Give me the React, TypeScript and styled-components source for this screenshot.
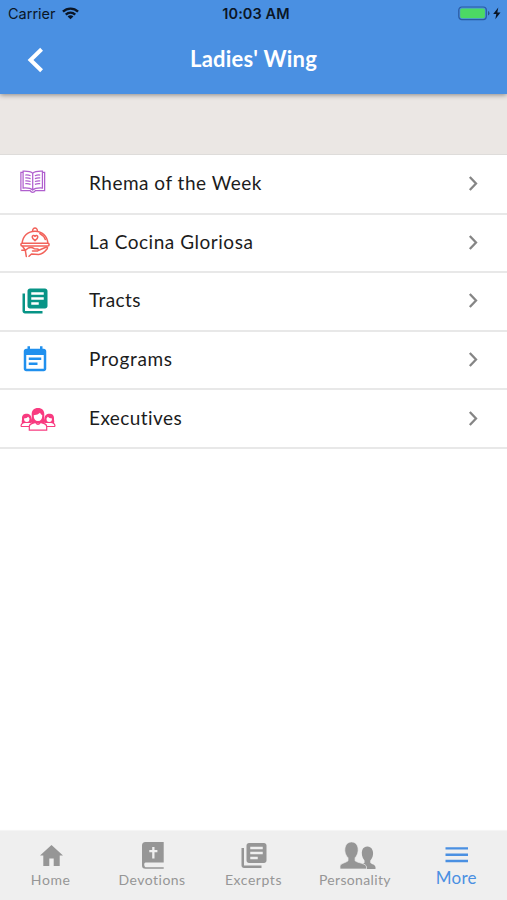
import React from 'react';
import styled, { createGlobalStyle } from 'styled-components';

const GlobalStyle = createGlobalStyle`
  *, *::before, *::after { box-sizing: border-box; }
  body { margin: 0; background: #fff; font-family: Lato, "Liberation Sans", sans-serif; }
`;

const Screen = styled.div`
  display: flex;
  flex-direction: column;
  width: 507px;
  height: 900px;
  overflow: hidden;
  background: #fff;
`;

const Header = styled.header`
  position: relative;
  z-index: 1;
  flex: none;
  height: 94px;
  background: #4a90e2;
  box-shadow: 0 1px 5px rgba(0, 0, 0, 0.42);
`;

const StatusBar = styled.div`
  display: grid;
  grid-template-columns: 1fr auto 1fr;
  align-items: center;
  height: 28px;
  padding: 0 6px 0 8px;
  color: #0b1626;
  font: 400 14.5px/28px Inter, "Liberation Sans", sans-serif;
`;

const Carrier = styled.div`
  display: flex;
  align-items: center;
  gap: 6px;
  svg { flex: none; margin-top: -2px; }
`;

const Clock = styled.div`
  font-weight: 600;
  letter-spacing: 0.1px;
  padding-left: 3px;
`;

const Power = styled.div`
  display: flex;
  justify-content: flex-end;
`;

const NavBar = styled.div`
  display: grid;
  grid-template-columns: 72px 1fr 72px;
  align-items: center;
  height: 62px;
  svg { display: block; margin-left: 27px; margin-top: 1px; }
`;

const Title = styled.h1`
  margin: 0;
  color: #fff;
  text-align: center;
  font-size: 22px;
  line-height: 30px;
  font-weight: 700;
  letter-spacing: 0.2px;
`;

const Banner = styled.div`
  flex: none;
  height: 61px;
  background: #ebe7e4;
  border-bottom: 1px solid #dedcda;
`;

const List = styled.ul`
  display: grid;
  grid-auto-rows: 58.6px;
  margin: 0;
  padding: 1px 0 0;
  list-style: none;
`;

const Row = styled.li`
  display: grid;
  grid-template-columns: 69px 1fr auto;
  align-items: center;
  padding: 0 27px 2px 20px;
  border-bottom: 2px solid #e8e8e8;
`;

const RowIcon = styled.span<{ $drop: number }>`
  display: block;
  height: 30px;
  margin-top: ${({ $drop }) => $drop}px;
  margin-bottom: ${({ $drop }) => -$drop}px;
  svg { display: block; }
`;

const RowLabel = styled.span<{ $tracking: number }>`
  color: #1c1c1c;
  font-size: 19px;
  line-height: 26px;
  letter-spacing: ${({ $tracking }) => $tracking}px;
`;

const TabBar = styled.nav`
  display: grid;
  grid-template-columns: repeat(5, 1fr);
  flex: none;
  height: 69px;
  margin-top: auto;
  background: #efefef;
  box-shadow: 0 -1px 1px #f5f5f5;
`;

const Tab = styled.div<{ $active?: boolean }>`
  display: flex;
  flex-direction: column;
  align-items: center;
  padding-top: ${({ $active }) => ($active ? 7 : 9)}px;
  color: ${({ $active }) => ($active ? '#4a90e2' : '#969696')};
  svg { display: block; height: 31px; }
`;

const TabIcon = styled.span<{ $indent?: number }>`
  display: block;
  padding-left: ${({ $indent = 0 }) => $indent}px;
`;

const TabLabel = styled.span<{ $active?: boolean; $tracking: number }>`
  font-size: ${({ $active }) => ($active ? 17 : 14)}px;
  line-height: 18px;
  letter-spacing: ${({ $tracking }) => $tracking}px;
`;

const LIBRARY_PATH =
  'M4 6H2v14c0 1.1.9 2 2 2h14v-2H4V6zm16-4H8c-1.1 0-2 .9-2 2v12c0 1.1.9 2 2 2h12c1.1 0 2-.9 2-2V4c0-1.1-.9-2-2-2zm-1 9H9V9h10v2zm-4 4H9v-2h6v2zm4-8H9V5h10v2z';

const WifiIcon = () => (
  <svg width="17" height="13" viewBox="0 0 18 13" fill="none" stroke="#0b1626" strokeWidth="2.5">
    <path d="M1 4.6C5.5.3 12.5.3 17 4.6" />
    <path d="M4 7.7C6.900 5 11.100 5 14 7.7" />
    <path d="M9 12.700 5.900 9.600C7.700 8.100 10.300 8.100 12.100 9.600Z" fill="#0b1626" stroke="none" />
  </svg>
);

const BatteryIcon = () => (
  <svg width="43" height="16" viewBox="0 0 43 16">
    <rect x=".8" y="1" width="27.500" height="12.600" rx="3" fill="none" stroke="#2b5aa0" strokeWidth="1.200" />
    <rect x="2.200" y="2.400" width="24.700" height="9.800" rx="1.700" fill="#4cd964" />
    <path d="M30 5Q31.500 5.500 31.500 7.300T30 9.600Z" fill="#2b5487" />
    <path d="M40.300 1.500 35.200 8H38.300L37.300 13.300 42.500 6.500H39.300Z" fill="#0b1626" />
  </svg>
);

const BackIcon = () => (
  <svg width="17" height="26" viewBox="0 0 17 26" fill="none" stroke="#fff" strokeWidth="4">
    <path d="M14.600 2.200 3.500 13 14.600 23.800" />
  </svg>
);

const BookIcon = () => (
  <svg width="26" height="25" viewBox="0 0 27 26" fill="none" stroke="#b05fce" strokeWidth="1.300">
    <path d="M3.200 3.500H.9V22.500H10.500Q11.500 24.200 13.200 24.200T16 22.500H25.600V3.500H23.300" />
    <path d="M13.200 4.500Q10.500 2 3.200 2.300V19.800Q10.500 19.300 13.200 22 16 19.300 23.300 19.800V2.300Q16 2 13.200 4.500V22" />
    <path d="M5.500 6.300Q8.500 6 11 7M5.500 9.300Q8.500 9 11 10M5.500 12.300Q8.500 12 11 13M5.500 15.300Q8.500 15 11 16M21 6.300Q18 6 15.500 7M21 9.300Q18 9 15.500 10M21 12.300Q18 12 15.500 13M21 15.300Q18 15 15.500 16" />
  </svg>
);

const ClocheIcon = () => (
  <svg width="30" height="31" viewBox="0 0 30 31" fill="none" stroke="#f2625a" strokeWidth="1.500" strokeLinejoin="round" strokeLinecap="round">
    <path d="M2.200 16.300C2.600 9 8 4.200 15 4.200S27.400 9 27.800 16.300" />
    <path d="M12.600 4.300C12.300 0 17.700 0 17.400 4.300M19.800 6.500Q24 8.600 25.300 12.500" />
    <rect x=".9" y="16.300" width="28.200" height="2.700" rx="1.200" />
    <path d="M15 13.700C13.300 12.300 12.200 11.400 12.200 10 12.200 8.200 14.300 8 15 9.300 15.700 8 17.800 8.200 17.800 10 17.800 11.400 16.700 12.300 15 13.700Z" />
    <path d="M2.500 19.300 5.300 23.300 8.300 21Q11.500 19.600 14.200 21.700L17.500 22Q19.500 22.600 17.800 23.900L12.500 24M18.800 23.200 26.500 20Q28.300 20.300 27 22 22.500 27.600 18.500 27.400L11.500 27 9 29.300M5.300 23.300 1.800 23.200M5.300 23.300 6.300 29.400" />
  </svg>
);

const LibraryIcon = ({ size, color }: { size: number; color: string }) => (
  <svg width={size} height={size} viewBox="0 0 24 24" fill={color}>
    <path d={LIBRARY_PATH} />
  </svg>
);

const CalendarIcon = () => (
  <svg width="30" height="30" viewBox="0 0 24 24" fill="#2090ee">
    <path d="M17 10H7v2h10v-2zm2-7h-1V1h-2v2H8V1H6v2H5c-1.110 0-1.990.9-1.990 2L3 19c0 1.100.89 2 2 2h14c1.100 0 2-.9 2-2V5c0-1.100-.9-2-2-2zm0 16H5V8h14v11zm-5-5H7v2h7v-2z" />
  </svg>
);

const WomenIcon = () => (
  <svg width="36" height="25" viewBox="0 0 36 25" fill="none" stroke="#f83b80" strokeWidth="1.200">
    <path d="M1 19.500H9M27 19.500H35M1 19.500Q1 16.200 4.300 15.700M35 19.500Q35 16.200 31.700 15.700" />
    <path d="M2 16C1.300 14.500 2.200 13.500 2 11.500 1.800 8 4 6.800 6.700 6.800S11.600 8.500 11.300 11.500 12 14.500 11 16ZM34 16C34.700 14.500 33.800 13.500 34 11.500 34.200 8 32 6.800 29.300 6.800S24.400 8.500 24.700 11.500 24 14.500 25 16Z" fill="#f83b80" stroke="none" />
    <path d="M4 11.500Q7 11.500 8.200 9.800L9.500 11.500Q9.600 15 6.800 15T4 11.500ZM32 11.500Q29 11.500 27.800 9.800L26.500 11.500Q26.400 15 29.200 15T32 11.500Z" fill="#fff" stroke="none" />
    <path d="M10.500 15.500C10.300 13.300 12 12 11.700 8 11.400 3.300 14 1 18 1S24.600 3.300 24.300 8C24 12 25.700 13.300 25.500 15.500Q18 18 10.500 15.500Z" fill="#f83b80" stroke="none" />
    <path d="M13.700 8.200Q18 8 20 5.700 20.800 7.600 22.300 8.200 22.300 14 18 14T13.700 8.200Z" fill="#fff" stroke="none" />
    <path d="M9.300 23.100V19.500Q9.500 17 12.500 16.400L15.500 15.500Q18 19.500 20.500 15.500L23.500 16.400Q26.500 17 26.700 19.500V23.100Z" fill="#fff" />
  </svg>
);

const ChevronIcon = () => (
  <svg width="13" height="18" viewBox="0 0 13 18" fill="none" stroke="#858585" strokeWidth="2.300">
    <path d="M2.800 3 9 9.500 2.800 16" />
  </svg>
);

const HomeIcon = () => (
  <svg width="26" height="31" viewBox="0 0 26 31" fill="currentColor">
    <path d="M13.500 5 2 15.500H5.300V26H11.300V18.500H15.700V26H21.700V15.500H25Z" />
  </svg>
);

const BibleIcon = () => (
  <svg width="24" height="31" viewBox="0 0 24 31" fill="currentColor">
    <path fillRule="evenodd" d="M4.500 2H22.700V22.500H4.500Q3.200 22.500 3.200 24.500T4.500 27.200H22.700V28.700H4.500Q1 28.700 1 25.500V5.500Q1 2 4.500 2ZM11.200 7V10H8.300V12.300H11.200V18.500H13.500V12.300H16.400V10H13.500V7Z" />
  </svg>
);

const PeopleIcon = () => (
  <svg width="38" height="31" viewBox="0 0 38 31" fill="currentColor">
    <path d="M20.500 29H36.500V27.300C36.500 24.800 32.500 24.200 31.300 22.800V20.500C34.300 17.500 34.600 13 33.500 10.200 32 5.200 24.700 5.200 23.200 10.200 22.300 13 22.800 17.500 25.500 20.500V22.800C24.700 23.700 23.500 24 22.500 24.500L27 29Z" />
    <path d="M1 29V26.500C1 23.400 6.300 23 9 20.800V17.800C5.600 14.500 5.200 9.500 6.500 6 8.500.5 16.600.5 18.500 6 19.800 9.500 19.300 14.500 16.100 17.800V20.800C18.800 23 27.500 23.400 27.500 27V29Z" stroke="#efefef" strokeWidth=".7" />
  </svg>
);

const MenuIcon = () => (
  <svg width="24" height="31" viewBox="0 0 24 31" fill="currentColor">
    <path d="M.5 9.200h22.500v2.400H.5zM.5 15.500h22.500v2.400H.5zM.5 21.800h22.500v2.400H.5z" />
  </svg>
);

const rows = [
  { label: 'Rhema of the Week', icon: <BookIcon />, tracking: 0.5, drop: 1 },
  { label: 'La Cocina Gloriosa', icon: <ClocheIcon />, tracking: 0.53, drop: 0 },
  { label: 'Tracts', icon: <LibraryIcon size={30} color="#079486" />, tracking: 0.4, drop: 1 },
  { label: 'Programs', icon: <CalendarIcon />, tracking: 0.65, drop: 1 },
  { label: 'Executives', icon: <WomenIcon />, tracking: 0.42, drop: 4 },
];

const tabs = [
  { label: 'Home', icon: <HomeIcon />, tracking: 0.6, indent: 0 },
  { label: 'Devotions', icon: <BibleIcon />, tracking: 0.48, indent: 2 },
  { label: 'Excerpts', icon: <LibraryIcon size={30} color="currentColor" />, tracking: 0.55, indent: 1 },
  { label: 'Personality', icon: <PeopleIcon />, tracking: 0.35, indent: 6 },
  { label: 'More', icon: <MenuIcon />, tracking: 0.3, indent: 1, active: true },
];

export default function App() {
  return (
    <>
      <GlobalStyle />
      <Screen>
        <Header>
          <StatusBar>
            <Carrier>Carrier <WifiIcon /></Carrier>
            <Clock>10:03 AM</Clock>
            <Power><BatteryIcon /></Power>
          </StatusBar>
          <NavBar>
            <BackIcon />
            <Title>Ladies' Wing</Title>
          </NavBar>
        </Header>
        <Banner />
        <List>
          {rows.map((row) => (
            <Row key={row.label}>
              <RowIcon $drop={row.drop}>{row.icon}</RowIcon>
              <RowLabel $tracking={row.tracking}>{row.label}</RowLabel>
              <ChevronIcon />
            </Row>
          ))}
        </List>
        <TabBar>
          {tabs.map((tab) => (
            <Tab key={tab.label} $active={tab.active}>
              <TabIcon $indent={tab.indent}>{tab.icon}</TabIcon>
              <TabLabel $active={tab.active} $tracking={tab.tracking}>{tab.label}</TabLabel>
            </Tab>
          ))}
        </TabBar>
      </Screen>
    </>
  );
}
